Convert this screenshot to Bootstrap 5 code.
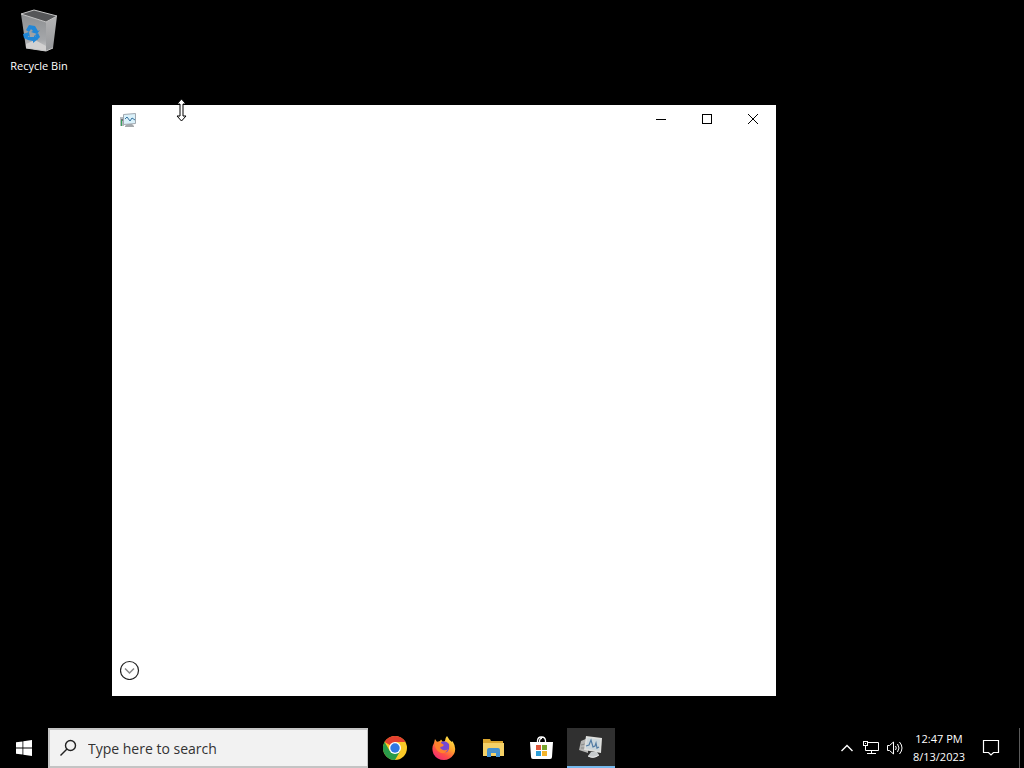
<!DOCTYPE html>
<html lang="en">
<head>
<meta charset="utf-8">
<meta name="viewport" content="width=device-width, initial-scale=1">
<title>Desktop</title>
<link rel="stylesheet" href="https://cdn.jsdelivr.net/npm/bootstrap@5.3.0/dist/css/bootstrap.min.css">
<style>
  body { background: #000; font-family: "Open Sans", "Noto Sans", sans-serif; }
  svg { display: block; flex: none; }
  .desktop-link { width: 78px; font-size: 11px; line-height: 16px; color: #fff; }
  .app-window { left: 112px; top: 105px; width: 664px; height: 591px; background: #fff; }
  .caption-btn { width: 46px; height: 29px; color: #000; }
  .plain-btn { border: 0; background: none; padding: 0; display: flex; align-items: center; justify-content: center; }
  .pointer { left: 176px; top: 98px; pointer-events: none; }
  .taskbar { height: 40px; color: #fff; }
  .start-btn { width: 48px; }
  .search-box { width: 320px; background: #f2f2f2; border: 2px solid #c4c4c4; border-right-width: 1px; }
  .search-box input { border: 0; background: none; outline: 0; font-size: 14px; line-height: 20px; padding: 2px 0 0 2px; color: #333; min-width: 0; }
  .search-box input::placeholder { color: #333; opacity: 1; }
  .apps { gap: 1px; margin-left: 3px; }
  .app-btn { width: 48px; }
  .app-btn.active { background: #303030; border-bottom: 2px solid #76b9ed; padding-top: 2px; }
  .tray-btn { width: 24px; color: #fff; }
  .clock { width: 64px; font-size: 11px; line-height: 18px; color: #fff; white-space: nowrap; }
  .notice-btn { width: 40px; margin-right: 8px; color: #fff; }
  .peek-btn { width: 5px; border-left: 1px solid #5c5c5c; }
</style>
</head>
<body class="vh-100 d-flex flex-column overflow-hidden">

<main class="flex-grow-1">
  <a href="#" class="desktop-link d-flex flex-column align-items-center text-decoration-none pt-2">
    <svg width="42" height="50" viewBox="0 0 42 50" aria-hidden="true">
      <defs>
        <linearGradient id="binL" x1="0" y1="0" x2="0" y2="1"><stop offset="0" stop-color="#8d8f91"/><stop offset=".7" stop-color="#a5a7aa"/><stop offset="1" stop-color="#d0d0d0"/></linearGradient>
        <linearGradient id="binR" x1="0" y1="0" x2="0" y2="1"><stop offset="0" stop-color="#b4b4b5"/><stop offset="1" stop-color="#96989b"/></linearGradient>
      </defs>
      <path d="M3 6L16 2L39 8L28 14Z" fill="#555658"/>
      <path d="M3 6L28 14L28 43L8 40Z" fill="url(#binL)"/>
      <path d="M28 14L39 8L35 40L28 43Z" fill="url(#binR)"/>
      <path d="M8 36L17 32L28 38V43L8 40Z" fill="#d2d1d1"/>
      <path d="M3 6L16 2L39 8L28 14Z" fill="none" stroke="#c6c6c6"/>
      <path d="M8 40L28 43L35 40" fill="none" stroke="#c8c8c8"/>
      <g fill="#2187d7">
        <path d="M8 22L11 17L17 18L20 23L22 22L19 26L13 24L15 23L13 21L11 24Z"/>
        <path d="M5 26L11 24L12 29L10 28L10 32L6 30Z"/>
        <path d="M10 29L16 29V27L20 31L15 35V33L10 32Z"/>
        <path d="M17 27L20 25L22 29L19 32Z"/>
      </g>
    </svg>
    <span>Recycle Bin</span>
  </a>
</main>

<section class="app-window position-absolute d-flex flex-column" aria-label="Application window">
  <header class="d-flex align-items-start">
    <svg class="ms-2 mt-2" width="16" height="16" viewBox="0 0 16 16" aria-hidden="true">
      <rect x="0" y="4" width="4" height="9" fill="#b5bbbf"/>
      <path d="M1 6H3V8H1Z" fill="#70757a"/><path d="M1 7H2V13H1Z" fill="#38a35c"/>
      <path d="M7 11H12L14 13V14H5V13Z" fill="#a5a9ac"/>
      <path d="M3.500 1.500L15.500 .5V10.500L3.500 11.500Z" fill="#daf1fa" stroke="#a0a8b0"/>
      <path d="M5 6L7 4L10 8L12 5L15 7" fill="none" stroke="#36729f"/>
    </svg>
    <div class="d-flex ms-auto">
      <button class="caption-btn plain-btn" type="button" aria-label="Minimize"><svg width="12" height="11" viewBox="0 0 12 11"><path d="M1 5.500H11" stroke="currentColor"/></svg></button>
      <button class="caption-btn plain-btn" type="button" aria-label="Maximize"><svg width="11" height="11" viewBox="0 0 11 11"><rect x=".5" y=".5" width="9" height="9" fill="none" stroke="currentColor"/></svg></button>
      <button class="caption-btn plain-btn" type="button" aria-label="Close"><svg width="11" height="11" viewBox="0 0 11 11"><path d="M0 0L10 10M10 0L0 10" stroke="currentColor"/></svg></button>
    </div>
  </header>
  <footer class="mt-auto px-2 pb-3">
    <button class="plain-btn" type="button" aria-label="More details">
      <svg width="20" height="20" viewBox="0 0 20 20"><circle cx="9.500" cy="10.500" r="9" fill="#fff" stroke="#222" stroke-width="1.200"/><path d="M5 8.500L9.500 13L14 8.500" fill="none" stroke="#888" stroke-width="1.500"/></svg>
    </button>
  </footer>
</section>

<nav class="taskbar d-flex align-items-stretch" aria-label="Taskbar">
  <button class="start-btn plain-btn" type="button" aria-label="Start">
    <svg width="16" height="16" viewBox="0 0 16 16" fill="#fff"><path d="M0 2.300L6.500 1.400V7.500H0ZM7.300 1.300L16 0V7.500H7.300ZM0 8.500H6.500V14.600L0 13.700ZM7.300 8.500H16V16L7.300 14.700Z"/></svg>
  </button>
  <label class="search-box d-flex align-items-center">
    <svg class="ms-2" width="20" height="20" viewBox="0 0 20 20" fill="none" stroke="#222" stroke-width="1.400"><circle cx="12.500" cy="7.500" r="5"/><path d="M9 11L2.500 17.500"/></svg>
    <input class="flex-grow-1 ms-2" type="text" placeholder="Type here to search" aria-label="Type here to search">
  </label>
  <div class="apps d-flex">
    <button class="app-btn plain-btn" type="button" aria-label="Chrome">
      <svg width="24" height="24" viewBox="0 0 24 24">
        <circle cx="12" cy="12" r="12" fill="#fbc927"/>
        <path d="M12 12L1.600 6A12 12 0 0 1 22.400 6H12Z" fill="#e4402f"/>
        <path d="M1.600 6A12 12 0 0 0 12 24L17.200 15L12 12L6.800 15Z" fill="#299b49"/>
        <circle cx="12" cy="12" r="6" fill="#fff"/><circle cx="12" cy="12" r="4.700" fill="#2f78e4"/>
      </svg>
    </button>
    <button class="app-btn plain-btn" type="button" aria-label="Firefox">
      <svg width="24" height="24" viewBox="0 0 24 24">
        <defs><linearGradient id="fox" x1=".85" y1="0" x2=".2" y2="1"><stop offset="0" stop-color="#fff14f"/><stop offset=".4" stop-color="#ffa62c"/><stop offset=".7" stop-color="#ff4f47"/><stop offset="1" stop-color="#ee2879"/></linearGradient></defs>
        <path d="M3 3L5 6L8 5L9 3.500L11 6L13 5Q13 2 15 0Q17 4 20 6L20.500 5Q25 12 22 18Q18 24 12 24Q5 24 1.500 18Q-1 12 2 7Z" fill="url(#fox)"/>
        <path d="M9 6Q14 4 17 8Q18 13 15 16Q10 17 8 13Z" fill="#7548d5"/>
        <path d="M3 6Q6 5 9 7L12 9Q11 11 8 11Q8 13 11 14Q14 15 16 13Q14 18 9 17Q4 15 3 10Z" fill="#ff812d"/>
      </svg>
    </button>
    <button class="app-btn plain-btn" type="button" aria-label="File Explorer">
      <svg width="24" height="24" viewBox="0 0 24 24">
        <path d="M2 3H9L10 5H22V20H2Z" fill="#dca62e"/><path d="M2 7H23V20H2Z" fill="#f5d167"/>
        <path d="M6 21V14Q6 12 8 12H17Q19 12 19 14V21H15V17H10V21Z" fill="#4291d2"/>
        <path d="M6 15H19" stroke="#5a92ba"/>
      </svg>
    </button>
    <button class="app-btn plain-btn" type="button" aria-label="Microsoft Store">
      <svg width="24" height="24" viewBox="0 0 24 24">
        <path d="M7.500 7V4.500Q8 1 11 1H12Q15 1 15.500 4.500V7M9.500 6Q9.500 2 12 2.500" fill="none" stroke="#fff" stroke-width="1.300"/>
        <path d="M0 6H23L22 21Q22 23 20 23H3Q1 23 1 21Z" fill="#fff"/>
        <path d="M6 9H11V14H6Z" fill="#e0583c"/><path d="M12 9H17V14H12Z" fill="#78a52e"/><path d="M6 15H11V20H6Z" fill="#2d9fd8"/><path d="M12 15H17V20H12Z" fill="#f3b42a"/>
      </svg>
    </button>
    <button class="app-btn plain-btn active" type="button" aria-label="Monitor">
      <svg width="24" height="24" viewBox="0 0 24 24">
        <path d="M2 5L9 2V17L0 14Z" fill="#b4b4b2"/><path d="M2 9L6 8M2 12H6" stroke="#8a8a88"/>
        <path d="M12 16H18L20 19Q15 24 9 20Z" fill="#c7cbcd"/><path d="M9 20Q14 23 20 19" fill="none" stroke="#eee"/>
        <path d="M7 0L23 2L22 17L5 14Z" fill="#dedfdd"/><path d="M8.500 2L21 3.500L20.500 15L7 12.500Z" fill="#cbd6db"/>
        <path d="M7 10L10 9L12 4L14 11L16 10L17 7L18 12L20 11" fill="none" stroke="#527ca4" stroke-width="1.200"/>
      </svg>
    </button>
  </div>
  <div class="d-flex ms-auto">
    <button class="tray-btn plain-btn" type="button" aria-label="Show hidden icons"><svg width="16" height="16" viewBox="0 0 16 16" fill="none" stroke="currentColor" stroke-width="1.400"><path d="M2.500 11L8 5.500L13.500 11"/></svg></button>
    <button class="tray-btn plain-btn" type="button" aria-label="Network"><svg width="18" height="16" viewBox="0 0 18 16" fill="none" stroke="currentColor"><path d="M5.500 2.500H16.500V10.500H3.500V5.500M9.500 10.500V13.500M5 13.500H14"/><rect x="1.500" y="1.500" width="4" height="4"/><path d="M3 3.500H4"/></svg></button>
    <button class="tray-btn plain-btn" type="button" aria-label="Volume"><svg width="18" height="16" viewBox="0 0 18 16" fill="none" stroke="currentColor"><path d="M1.500 5.500H3.500L7.500 2V14L3.500 10.500H1.500ZM9.500 6Q11 8 9.500 10M11.500 4Q14.500 8 11.500 12M13.500 2Q18.500 8 13.500 14"/></svg></button>
    <button class="clock plain-btn flex-column" type="button"><span>12:47 PM</span><span>8/13/2023</span></button>
    <button class="notice-btn plain-btn" type="button" aria-label="Notifications"><svg width="18" height="18" viewBox="0 0 18 18" fill="none" stroke="currentColor" stroke-width="1.200"><path d="M1.500 1.500H16.500V13.500H11.500L9 16L6.500 13.500H1.500Z"/></svg></button>
    <button class="peek-btn plain-btn border-top-0 border-end-0 border-bottom-0" type="button" aria-label="Show desktop"></button>
  </div>
</nav>

<svg class="pointer position-absolute" width="11" height="24" viewBox="0 0 11 24" aria-hidden="true">
  <path d="M5.500 1L10 6H7V18H10L5.500 23L1 18H4V6H1Z" fill="#fff" stroke="#000"/>
</svg>

<script src="https://cdn.jsdelivr.net/npm/bootstrap@5.3.0/dist/js/bootstrap.bundle.min.js"></script>
</body>
</html>
